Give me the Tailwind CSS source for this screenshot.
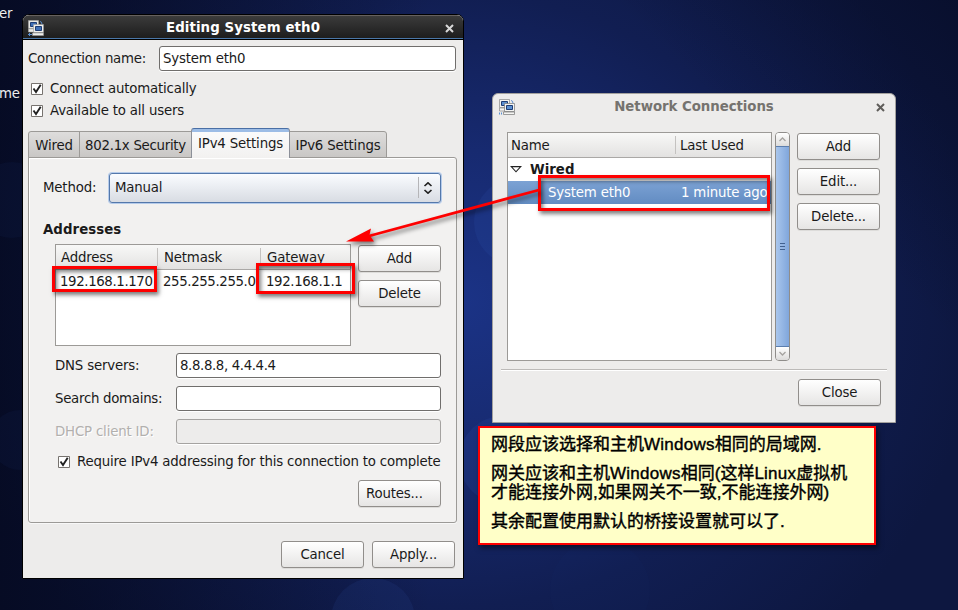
<!DOCTYPE html>
<html lang="zh-CN">
<head>
  <meta charset="UTF-8">
  <meta name="viewport" content="width=device-width, initial-scale=1.0">
  <title>Network Connections</title>
  <script src="https://cdn.jsdelivr.net/npm/@tailwindcss/browser@4"></script>
</head>
<body class="relative w-[958px] h-[610px] overflow-hidden whitespace-nowrap bg-[#0d1a4a] font-['DejaVu_Sans',sans-serif] text-[13.33px] leading-4 tracking-[-0.18px] text-[#1a1a1a]">
  <!-- Desktop wallpaper -->
  <div class="absolute inset-0 bg-[radial-gradient(ellipse_520px_470px_at_460px_300px,#1b3386_0%,#172a70_32%,#111e52_65%,#0d1740_100%)]"></div>
  <div class="absolute inset-0 bg-[linear-gradient(90deg,rgba(3,6,24,0.7)_0%,transparent_45%),linear-gradient(225deg,rgba(4,8,28,0.5)_0%,transparent_22%)]"></div>
  <svg class="absolute inset-0" width="958" height="610" fill="#3c5fc8">
    <circle cx="503" cy="460" r="44" opacity="0.12" />
    <circle cx="373" cy="620" r="42" opacity="0.1" />
    <circle cx="518" cy="222" r="44" opacity="0.12" />
    <circle cx="600" cy="590" r="50" opacity="0.02" />
    <circle cx="12" cy="200" r="38" opacity="0.05" />
    <circle cx="20" cy="440" r="30" opacity="0.05" />
  </svg>
  <div class="absolute left-[-1px] top-[6px] text-[#eee]">er</div>
  <div class="absolute left-[-1px] top-[86px] text-[#eee]">me</div>

  <!-- Editing window -->
  <div class="absolute left-[22px] top-[14px] w-[442px] h-[565px] flex flex-col rounded-t-[7px] border border-black bg-[#edeceb] overflow-hidden">
    <div class="relative h-[25px] shrink-0 flex items-center justify-center bg-linear-to-b from-[#3b3b3b] to-[#1c1c1c] border-t border-t-[#66615e] border-b border-b-black shadow-[inset_0_-1px_0_#4a77a8] text-white font-bold">
      <svg class="absolute left-[5px] top-[4px]" width="16" height="16" viewBox="0 0 16 16">
        <path d="M.5 .5h10v8H.5zM.5 9h10v3H.5z" fill="#e8e8e4" stroke="#aaa" stroke-width=".6" />
        <path d="M2.5 2.5h6v4h-6z" fill="#3f6fb5" stroke="#1d3c74" />
        <path d="M12 1.5q2 0 2 3" stroke="#5b8fd0" fill="none" />
        <path d="M5.5 4.5h10v8h-10zM4.5 13h11v2.5h-11z" fill="#eeeeec" stroke="#999" stroke-width=".6" />
        <path d="M7.500 6.500h6v4h-6z" fill="#3f6fb5" stroke="#1d3c74" />
        <path d="M0 14.5h4M1.5 13v3" stroke="#5b8fd0" />
      </svg>
      <span class="tracking-[0.1px]">Editing System eth0</span>
      <svg class="absolute right-[9px] top-[8px]" width="9" height="9" viewBox="0 0 9 9"><path d="M1 1l7 7M8 1L1 8" stroke="#d8d8d8" stroke-width="2" /></svg>
    </div>

    <div class="px-[5px] pt-[6px] flex flex-col">
      <div class="flex items-center h-[25px]">
        <label class="w-[131px] tracking-[-0.25px]">Connection name:</label>
        <div class="w-[297px] h-[25px] rounded-[3px] border border-[#706e6c] bg-white shadow-[0_1px_0_#fff] pl-[3px] leading-[23px]">System eth0</div>
      </div>

      <div class="mt-[7px] pl-[3px] flex flex-col">
        <div class="flex items-center h-[22px] gap-[7px]">
          <svg width="12" height="12" viewBox="0 0 12 12"><path d="M.5 .5h11v11H.5z" fill="#fff" stroke="#77736f" /><path d="M2.5 5.5l2.5 3.5L9.7 1.8" fill="none" stroke="#222" stroke-width="1.9" /></svg>
          <span>Connect automatically</span>
        </div>
        <div class="flex items-center h-[22px] gap-[7px]">
          <svg width="12" height="12" viewBox="0 0 12 12"><path d="M.5 .5h11v11H.5z" fill="#fff" stroke="#77736f" /><path d="M2.5 5.5l2.5 3.5L9.7 1.8" fill="none" stroke="#222" stroke-width="1.9" /></svg>
          <span>Available to all users</span>
        </div>
      </div>

      <!-- Tabs -->
      <div class="relative z-10 mt-[6px] -mb-px flex items-end h-[30px]">
        <div class="w-[52px] h-[27px] rounded-tl-[3px] border border-[#9c9a97] bg-linear-to-b from-[#dedddc] to-[#c9c7c5] text-center leading-[27px]">Wired</div>
        <div class="-ml-px w-[113px] h-[27px] border border-[#9c9a97] bg-linear-to-b from-[#dedddc] to-[#c9c7c5] text-center leading-[27px] tracking-[-0.28px]">802.1x Security</div>
        <div class="relative -ml-px w-[99px] h-[30px] rounded-t-[3px] border border-b-0 border-[#8c9099] border-t-[#4a6fa5] bg-[linear-gradient(#9dbde6_0_3px,#fbfbfb_3px,#f2f1f0)] text-center leading-[30px]">IPv4 Settings</div>
        <div class="-ml-px w-[98px] h-[27px] rounded-tr-[3px] border border-[#9c9a97] bg-linear-to-b from-[#dedddc] to-[#c9c7c5] text-center leading-[27px]">IPv6 Settings</div>
      </div>

      <!-- IPv4 page -->
      <div class="w-[429px] h-[366px] rounded-b-[3px] rounded-tr-[3px] border border-[#9c9a97] bg-[#f2f1f0] shadow-[inset_1px_1px_0_#fff,0_1px_0_#f8f8f8] pl-[14px] pt-[14px]">
        <div class="flex items-center h-[31px]">
          <label class="w-[66px]">Method:</label>
          <div class="w-[332px] h-[30px] flex items-center rounded-[3px] border border-[#5478ab] bg-linear-to-b from-[#fafcff] to-[#d8dce3] shadow-[0_0_0_1px_#b5cbea] pl-[5px]">
            <span class="grow">Manual</span>
            <div class="w-px h-[21px] bg-[#b5b5b8]"></div>
            <svg class="ml-[4px] mr-[7px]" width="10" height="12" viewBox="0 0 10 12"><path d="M1.5 4L5 .8 8.5 4M1.5 8L5 11.2 8.5 8" fill="none" stroke="#222" stroke-width="1.6" /></svg>
          </div>
        </div>

        <div class="mt-[19px] font-bold tracking-[0.05px]">Addresses</div>

        <div class="mt-[6px] pl-[12px] flex gap-[7px]">
          <div class="w-[296px] h-[102px] border border-[#9c9a97] bg-white">
            <div class="flex h-[25px] items-center border-b border-[#aaa8a6] bg-linear-to-b from-[#f8f8f7] to-[#e3e2e1]">
              <div class="w-[101px] pl-[5px] h-[18px] leading-[19px]">Address</div>
              <div class="w-[103px] pl-[6px] h-[18px] border-l border-[#c4c2c0] leading-[19px]">Netmask</div>
              <div class="pl-[6px] h-[18px] border-l border-[#c4c2c0] leading-[19px]">Gateway</div>
            </div>
            <div class="flex h-[23px] items-center tracking-[-0.38px]">
              <div class="w-[103px] pl-[4px]">192.168.1.170</div>
              <div class="w-[103px] pl-[4px]">255.255.255.0</div>
              <div class="pl-[4px]">192.168.1.1</div>
            </div>
          </div>
          <div class="flex flex-col gap-[8px] pt-px">
            <button class="w-[83px] h-[27px] rounded-[3px] border border-[#918e8b] bg-linear-to-b from-white to-[#e6e5e4] shadow-[0_1px_0_#dddcda]">Add</button>
            <button class="w-[83px] h-[27px] rounded-[3px] border border-[#918e8b] bg-linear-to-b from-white to-[#e6e5e4] shadow-[0_1px_0_#dddcda]">Delete</button>
          </div>
        </div>

        <div class="mt-[7px] pl-[12px] flex flex-col gap-[8px]">
          <div class="flex items-center">
            <label class="w-[121px]">DNS servers:</label>
            <div class="w-[265px] h-[25px] rounded-[3px] border border-[#706e6c] bg-white shadow-[0_1px_0_#fff] pl-[3px] leading-[23px] tracking-[-0.38px]">8.8.8.8, 4.4.4.4</div>
          </div>
          <div class="flex items-center">
            <label class="w-[121px] tracking-[-0.28px]">Search domains:</label>
            <div class="w-[265px] h-[25px] rounded-[3px] border border-[#706e6c] bg-white shadow-[0_1px_0_#fff]"></div>
          </div>
          <div class="flex items-center">
            <label class="w-[121px] text-[#b2b0ae] [text-shadow:1px_1px_0_#fff]">DHCP client ID:</label>
            <div class="w-[265px] h-[25px] rounded-[3px] border border-[#a5a3a1] bg-[#edeceb] shadow-[0_1px_0_#fff]"></div>
          </div>
        </div>

        <div class="mt-[7px] pl-[15px] flex items-center h-[22px] gap-[7px]">
          <svg width="12" height="12" viewBox="0 0 12 12"><path d="M.5 .5h11v11H.5z" fill="#fff" stroke="#77736f" /><path d="M2.5 5.5l2.5 3.5L9.7 1.8" fill="none" stroke="#222" stroke-width="1.9" /></svg>
          <span>Require IPv4 addressing for this connection to complete</span>
        </div>
        <button class="mt-[7px] ml-[315px] w-[83px] h-[27px] rounded-[3px] border border-[#918e8b] bg-linear-to-b from-white to-[#e6e5e4] shadow-[0_1px_0_#dddcda] pl-[7px] text-left">Routes...</button>
      </div>

      <div class="mt-[18px] flex justify-end gap-[8px] pr-[3px]">
        <button class="w-[83px] h-[27px] rounded-[3px] border border-[#918e8b] bg-linear-to-b from-white to-[#e6e5e4] shadow-[0_1px_0_#dddcda]">Cancel</button>
        <button class="w-[83px] h-[27px] rounded-[3px] border border-[#918e8b] bg-linear-to-b from-white to-[#e6e5e4] shadow-[0_1px_0_#dddcda]">Apply...</button>
      </div>
    </div>
  </div>

  <!-- Network Connections window -->
  <div class="absolute left-[492px] top-[93px] w-[404px] h-[330px] rounded-t-[6px] border border-[#a3a19e] bg-[#edeceb]">
    <div class="relative h-[25px] flex items-center justify-center text-[#75736f] font-bold">
      <svg class="absolute left-[6px] top-[5px]" width="16" height="16" viewBox="0 0 16 16">
        <path d="M.5 .5h10v8H.5zM.5 9h10v3H.5z" fill="#f4f4f2" stroke="#888" stroke-width=".7" />
        <path d="M2.5 2.5h6v4h-6z" fill="#5b8fd0" stroke="#1d3c74" />
        <path d="M12 1.5q2 0 2 3" stroke="#5b8fd0" fill="none" />
        <path d="M5.5 4.5h10v8h-10zM4.5 13h11v2.5h-11z" fill="#f4f4f2" stroke="#777" stroke-width=".7" />
        <path d="M7.500 6.500h6v4h-6z" fill="#5b8fd0" stroke="#1d3c74" />
        <path d="M0 14.5h4" stroke="#5b8fd0" stroke-width="2" stroke-dasharray="1 1" />
      </svg>
      <span class="tracking-[-0.05px]">Network Connections</span>
      <svg class="absolute right-[10px] top-[9px]" width="9" height="9" viewBox="0 0 9 9"><path d="M1 1l7 7M8 1L1 8" stroke="#5f5d5a" stroke-width="2" /></svg>
    </div>
    <div class="pl-[14px] pt-[13px] flex">
      <div class="w-[265px] h-[229px] border border-[#9c9a97] bg-white">
        <div class="flex h-[25px] items-center border-b border-[#aaa8a6] bg-linear-to-b from-[#f8f8f7] to-[#e3e2e1]">
          <div class="w-[167px] pl-[3px] h-[18px] leading-[20px]">Name</div>
          <div class="pl-[4px] h-[18px] leading-[20px] border-l border-[#c4c2c0]">Last Used</div>
        </div>
        <div class="flex h-[23px] items-center gap-[8px] pl-[2px] font-bold tracking-normal">
          <svg width="12" height="7" viewBox="0 0 12 7"><path d="M1.2 .6h9.6L6 5.8z" fill="#fff" stroke="#222" stroke-width="1.1" /></svg>
          <span>Wired</span>
        </div>
        <div class="flex h-[23px] items-center bg-linear-to-b from-[#7ca2d4] to-[#628cc2] text-white">
          <div class="w-[173px] pl-[40px]">System eth0</div>
          <div>1 minute ago</div>
        </div>
      </div>
      <!-- Scrollbar -->
      <div class="ml-[3px] w-[15px] h-[229px] flex flex-col rounded-[4px] border border-[#8f8d8a] overflow-hidden">
        <div class="h-[13px] flex items-center justify-center bg-linear-to-b from-white to-[#dddcdb]">
          <svg width="7" height="5" viewBox="0 0 7 5"><path d="M.5 4L3.5 1l3 3" fill="none" stroke="#a5a3a0" stroke-width="1.3" /></svg>
        </div>
        <div class="grow border-y border-[#5b7eae] bg-linear-to-r from-[#a9c6ec] to-[#80a6db] flex flex-col items-center justify-center gap-[2px]">
          <div class="w-[5px] h-px bg-[#41618f]"></div>
          <div class="w-[5px] h-px bg-[#41618f]"></div>
          <div class="w-[5px] h-px bg-[#41618f]"></div>
        </div>
        <div class="h-[13px] flex items-center justify-center bg-linear-to-b from-white to-[#dddcdb]">
          <svg width="7" height="5" viewBox="0 0 7 5"><path d="M.5 1l3 3 3-3" fill="none" stroke="#a5a3a0" stroke-width="1.3" /></svg>
        </div>
      </div>
      <div class="ml-[7px] pt-px flex flex-col gap-[8px]">
        <button class="w-[83px] h-[27px] rounded-[3px] border border-[#918e8b] bg-linear-to-b from-white to-[#e6e5e4] shadow-[0_1px_0_#dddcda]">Add</button>
        <button class="w-[83px] h-[27px] rounded-[3px] border border-[#918e8b] bg-linear-to-b from-white to-[#e6e5e4] shadow-[0_1px_0_#dddcda]">Edit...</button>
        <button class="w-[83px] h-[27px] rounded-[3px] border border-[#918e8b] bg-linear-to-b from-white to-[#e6e5e4] shadow-[0_1px_0_#dddcda]">Delete...</button>
      </div>
    </div>
    <div class="mt-[8px] ml-[8px] w-[386px] h-[2px] border-t border-[#bcbab8] bg-white"></div>
    <div class="mt-[8px] pr-[14px] flex justify-end">
      <button class="w-[83px] h-[27px] rounded-[3px] border border-[#918e8b] bg-linear-to-b from-white to-[#e6e5e4] shadow-[0_1px_0_#dddcda]">Close</button>
    </div>
  </div>

  <!-- Highlights and arrow -->
  <div class="absolute left-[52px] top-[266px] w-[105px] h-[26px] border-3 border-[#fe0000] shadow-[2px_3px_4px_rgba(0,0,0,0.5),inset_2px_3px_4px_rgba(0,0,0,0.5)]"></div>
  <div class="absolute left-[256px] top-[263px] w-[99px] h-[31px] border-3 border-[#fe0000] shadow-[2px_3px_4px_rgba(0,0,0,0.5),inset_2px_3px_4px_rgba(0,0,0,0.5)]"></div>
  <div class="absolute left-[538px] top-[175px] w-[232px] h-[36px] border-3 border-[#fe0000] shadow-[2px_3px_4px_rgba(0,0,0,0.5),inset_2px_3px_4px_rgba(0,0,0,0.5)]"></div>
  <svg class="absolute inset-0 drop-shadow-[2px_3px_2px_rgba(0,0,0,0.5)]" width="958" height="610">
    <path d="M539 190L369 236" stroke="#fe0000" stroke-width="2.8" />
    <path d="M346 241.500L371 228.500l-1.500 6.500 4.500 6.500z" fill="#fe0000" />
  </svg>

  <!-- Note -->
  <div class="absolute left-[478px] top-[426px] w-[398px] h-[119px] border-2 border-[#fe0000] bg-[#ffffc8] shadow-[2px_3px_5px_rgba(0,0,0,0.5)] pl-[11px] pt-[7px] flex flex-col gap-[10px] font-['Liberation_Sans','Noto_Sans_CJK_SC',sans-serif] text-[17px] leading-[19px] tracking-normal text-black [-webkit-text-stroke:0.4px_black]">
    <p>网段应该选择和主机<span class="tracking-[0.25px]">Windows</span>相同的局域网.</p>
    <p>网关应该和主机<span class="tracking-[0.25px]">Windows</span>相同(这样<span class="tracking-[0.25px]">Linux</span>虚拟机<br>才能连接外网,如果网关不一致,不能连接外网)</p>
    <p>其余配置使用默认的桥接设置就可以了.</p>
  </div>
</body>
</html>
